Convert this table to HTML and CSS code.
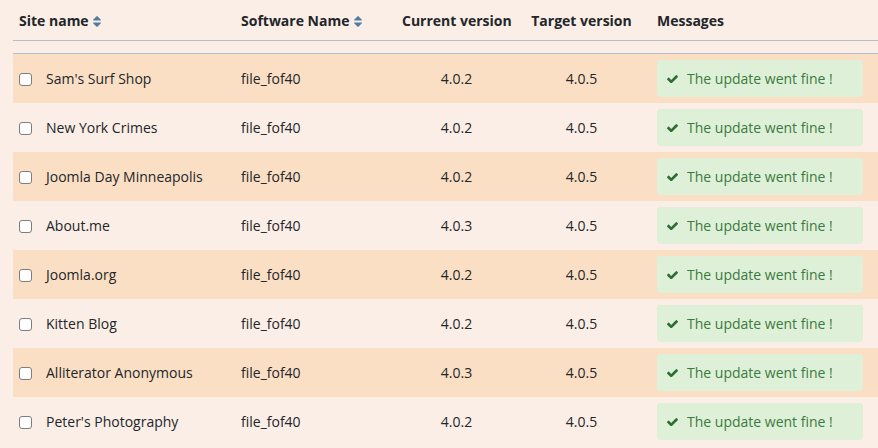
FILE: index.html
```html
<!DOCTYPE html>
<html lang="en">
<head>
<meta charset="utf-8">
<title>Sites update</title>
<link rel="stylesheet" href="styles.css">
</head>
<body>
<div class="page">
<table class="sites">
  <colgroup>
    <col class="c-site"><col class="c-soft"><col class="c-cur"><col class="c-tgt"><col class="c-msg">
  </colgroup>
  <thead>
    <tr>
      <th class="left">Site name <svg class="sort" viewBox="0 224 1024 1408" width="8" height="11"><path d="M1024 1120q0 26-19 45l-448 448q-19 19-45 19t-45-19l-448-448q-19-19-19-45t19-45 45-19h896q26 0 45 19t19 45zm0-384q0 26-19 45t-45 19h-896q-26 0-45-19t-19-45 19-45l448-448q19-19 45-19t45 19l448 448q19 19 19 45z"/></svg></th>
      <th class="left">Software Name <svg class="sort" viewBox="0 224 1024 1408" width="8" height="11"><path d="M1024 1120q0 26-19 45l-448 448q-19 19-45 19t-45-19l-448-448q-19-19-19-45t19-45 45-19h896q26 0 45 19t19 45zm0-384q0 26-19 45t-45 19h-896q-26 0-45-19t-19-45 19-45l448-448q19-19 45-19t45 19l448 448q19 19 19 45z"/></svg></th>
      <th class="center">Current version</th>
      <th class="center">Target version</th>
      <th class="left msg-h">Messages</th>
    </tr>
  </thead>
  <tbody class="spacer"><tr><td colspan="5"></td></tr></tbody>
  <tbody class="rows">
    <tr><td class="site"><input type="checkbox"><span>Sam's Surf Shop</span></td><td class="soft">file_fof40</td><td class="center">4.0.2</td><td class="center">4.0.5</td><td class="msg"><div class="ok"><svg class="chk" viewBox="121 330 1550 1130" width="11" height="8"><path d="M1671 566q0 40-28 68l-724 724-136 136q-28 28-68 28t-68-28l-136-136-362-362q-28-28-28-68t28-68l136-136q28-28 68-28t68 28l294 295 656-657q28-28 68-28t68 28l136 136q28 28 28 68z"/></svg>The update went fine !</div></td></tr>
    <tr><td class="site"><input type="checkbox"><span>New York Crimes</span></td><td class="soft">file_fof40</td><td class="center">4.0.2</td><td class="center">4.0.5</td><td class="msg"><div class="ok"><svg class="chk" viewBox="121 330 1550 1130" width="11" height="8"><path d="M1671 566q0 40-28 68l-724 724-136 136q-28 28-68 28t-68-28l-136-136-362-362q-28-28-28-68t28-68l136-136q28-28 68-28t68 28l294 295 656-657q28-28 68-28t68 28l136 136q28 28 28 68z"/></svg>The update went fine !</div></td></tr>
    <tr><td class="site"><input type="checkbox"><span>Joomla Day Minneapolis</span></td><td class="soft">file_fof40</td><td class="center">4.0.2</td><td class="center">4.0.5</td><td class="msg"><div class="ok"><svg class="chk" viewBox="121 330 1550 1130" width="11" height="8"><path d="M1671 566q0 40-28 68l-724 724-136 136q-28 28-68 28t-68-28l-136-136-362-362q-28-28-28-68t28-68l136-136q28-28 68-28t68 28l294 295 656-657q28-28 68-28t68 28l136 136q28 28 28 68z"/></svg>The update went fine !</div></td></tr>
    <tr><td class="site"><input type="checkbox"><span>About.me</span></td><td class="soft">file_fof40</td><td class="center">4.0.3</td><td class="center">4.0.5</td><td class="msg"><div class="ok"><svg class="chk" viewBox="121 330 1550 1130" width="11" height="8"><path d="M1671 566q0 40-28 68l-724 724-136 136q-28 28-68 28t-68-28l-136-136-362-362q-28-28-28-68t28-68l136-136q28-28 68-28t68 28l294 295 656-657q28-28 68-28t68 28l136 136q28 28 28 68z"/></svg>The update went fine !</div></td></tr>
    <tr><td class="site"><input type="checkbox"><span>Joomla.org</span></td><td class="soft">file_fof40</td><td class="center">4.0.2</td><td class="center">4.0.5</td><td class="msg"><div class="ok"><svg class="chk" viewBox="121 330 1550 1130" width="11" height="8"><path d="M1671 566q0 40-28 68l-724 724-136 136q-28 28-68 28t-68-28l-136-136-362-362q-28-28-28-68t28-68l136-136q28-28 68-28t68 28l294 295 656-657q28-28 68-28t68 28l136 136q28 28 28 68z"/></svg>The update went fine !</div></td></tr>
    <tr><td class="site"><input type="checkbox"><span>Kitten Blog</span></td><td class="soft">file_fof40</td><td class="center">4.0.2</td><td class="center">4.0.5</td><td class="msg"><div class="ok"><svg class="chk" viewBox="121 330 1550 1130" width="11" height="8"><path d="M1671 566q0 40-28 68l-724 724-136 136q-28 28-68 28t-68-28l-136-136-362-362q-28-28-28-68t28-68l136-136q28-28 68-28t68 28l294 295 656-657q28-28 68-28t68 28l136 136q28 28 28 68z"/></svg>The update went fine !</div></td></tr>
    <tr><td class="site"><input type="checkbox"><span>Alliterator Anonymous</span></td><td class="soft">file_fof40</td><td class="center">4.0.3</td><td class="center">4.0.5</td><td class="msg"><div class="ok"><svg class="chk" viewBox="121 330 1550 1130" width="11" height="8"><path d="M1671 566q0 40-28 68l-724 724-136 136q-28 28-68 28t-68-28l-136-136-362-362q-28-28-28-68t28-68l136-136q28-28 68-28t68 28l294 295 656-657q28-28 68-28t68 28l136 136q28 28 28 68z"/></svg>The update went fine !</div></td></tr>
    <tr><td class="site"><input type="checkbox"><span>Peter's Photography</span></td><td class="soft">file_fof40</td><td class="center">4.0.2</td><td class="center">4.0.5</td><td class="msg"><div class="ok"><svg class="chk" viewBox="121 330 1550 1130" width="11" height="8"><path d="M1671 566q0 40-28 68l-724 724-136 136q-28 28-68 28t-68-28l-136-136-362-362q-28-28-28-68t28-68l136-136q28-28 68-28t68 28l294 295 656-657q28-28 68-28t68 28l136 136q28 28 28 68z"/></svg>The update went fine !</div></td></tr>
  </tbody>
</table>
</div>
</body>
</html>
```

FILE: styles.css
```css
html, body {
  margin: 0;
  padding: 0;
  background: #fbeee6;
}
body {
  font-family: "Open Sans", "Liberation Sans", sans-serif;
  font-size: 14px;
  color: #22262a;
  overflow: hidden;
}
.page {
  padding-left: 13px;
}
.sites {
  width: 865px;
  table-layout: fixed;
  border-collapse: separate;
  border-spacing: 0;
}
.c-site { width: 222px; }
.c-soft { width: 161px; }
.c-cur { width: 121px; }
.c-tgt { width: 129px; }
.c-msg { width: 232px; }

.sites th {
  height: 40px;
  padding: 0 6px;
  font-weight: 700;
  font-size: 14px;
  border-bottom: 1px solid #b3bfca;
  vertical-align: middle;
  white-space: nowrap;
}
.sites th.left { text-align: left; }
.sites th.center { text-align: center; }
.sites th.msg-h { padding-left: 11px; }
.sort {
  fill: #4f7ca3;
  vertical-align: -1px;
  margin-left: 1px;
}
.spacer td {
  height: 12px;
  padding: 0;
  border-bottom: 1px solid #b3bfca;
}
.rows tr:nth-child(odd) { background: #fadfc4; }
.rows td {
  padding: 6px 6px;
  vertical-align: middle;
  white-space: nowrap;
}
.rows td.center { text-align: center; }
.rows td.site {
  display: flex;
  align-items: center;
  height: 37px;
}
.rows td.site input {
  appearance: none;
  -webkit-appearance: none;
  width: 13px;
  height: 13px;
  margin: 1px 14px 0 0;
  border: 1px solid #7d7d7d;
  border-radius: 3px;
  background: #fff;
  flex: none;
}
.rows td.msg {
  padding: 6px 15px 6px 11px;
}
.ok {
  height: 37px;
  box-sizing: border-box;
  display: flex;
  align-items: center;
  padding-left: 10px;
  background: #dff0d8;
  color: #3b7a3e;
  border-radius: 3px;
}
.chk {
  fill: #2f6e32;
  margin-right: 9px;
  flex: none;
}
```
